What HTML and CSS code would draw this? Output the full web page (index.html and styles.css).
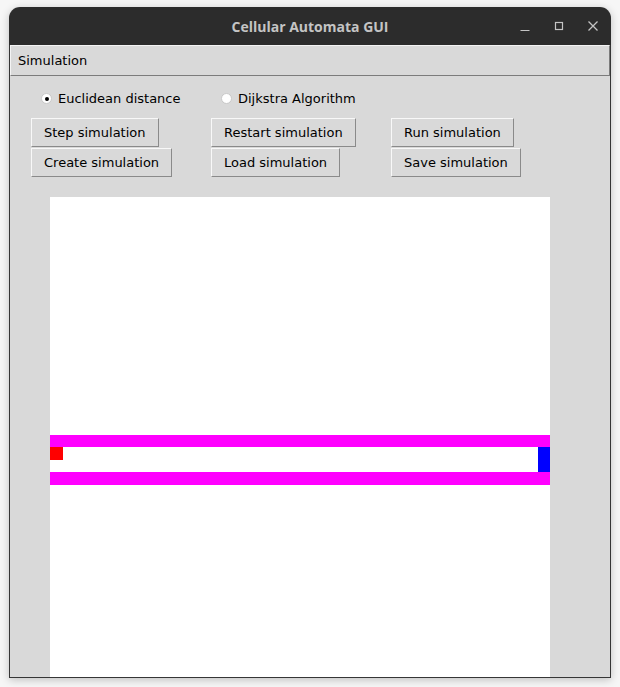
FILE: index.html
```html
<!DOCTYPE html>
<html>
<head>
<meta charset="utf-8">
<title>Cellular Automata GUI</title>
<link rel="stylesheet" href="styles.css">
</head>
<body>
<div class="window">
  <div class="titlebar">
    <span class="title">Cellular Automata GUI</span>
    <div class="controls">
      <svg class="ctl" width="12" height="12" viewBox="0 0 12 12"><path d="M1.5 10.5h9" stroke="#c4c4c4" stroke-width="1.2"/></svg>
      <svg class="ctl" width="12" height="12" viewBox="0 0 12 12"><rect x="2.5" y="2.5" width="7" height="7" fill="none" stroke="#c4c4c4" stroke-width="1.2"/></svg>
      <svg class="ctl" width="12" height="12" viewBox="0 0 12 12"><path d="M1.5 1.5l9 9M10.5 1.5l-9 9" stroke="#c4c4c4" stroke-width="1.3"/></svg>
    </div>
  </div>
  <div class="frame">
    <div class="menubar"><span class="menu-item">Simulation</span></div>
    <div class="content">
      <div class="grid">
        <label class="radio"><span class="dot checked"></span>Euclidean distance</label>
        <label class="radio"><span class="dot"></span>Dijkstra Algorithm</label>
        <span></span>
        <div class="cell"><button class="btn">Step simulation</button></div>
        <div class="cell"><button class="btn">Restart simulation</button></div>
        <div class="cell"><button class="btn">Run simulation</button></div>
        <div class="cell"><button class="btn">Create simulation</button></div>
        <div class="cell"><button class="btn">Load simulation</button></div>
        <div class="cell"><button class="btn">Save simulation</button></div>
      </div>
      <div class="canvas">
        <svg width="500" height="500" viewBox="0 0 500 500" shape-rendering="crispEdges">
          <rect x="0" y="237.5" width="500" height="12.5" fill="#ff00ff"/>
          <rect x="0" y="275" width="500" height="12.5" fill="#ff00ff"/>
          <rect x="0" y="250" width="12.5" height="12.5" fill="#ff0000"/>
          <rect x="487.5" y="250" width="12.5" height="25" fill="#0000ff"/>
        </svg>
      </div>
    </div>
  </div>
</div>
</body>
</html>
```
FILE: styles.css
```css
html, body {
  margin: 0;
  padding: 0;
}
body {
  background: #f6f6f6;
  width: 620px;
  height: 687px;
  overflow: hidden;
  font-family: "DejaVu Sans", sans-serif;
  font-size: 13px;
  color: #000;
}
.window {
  margin: 7px 0 0 9px;
  width: 602px;
  height: 671px;
  border-radius: 11px 11px 0 0;
  overflow: hidden;
  box-shadow: 0 2px 8px rgba(0, 0, 0, 0.22);
  display: flex;
  flex-direction: column;
}
.titlebar {
  height: 38px;
  flex: none;
  background: #2c2c2c;
  position: relative;
  display: flex;
  align-items: center;
  justify-content: center;
}
.title {
  font-family: "Open Sans", sans-serif;
  font-weight: 700;
  font-size: 14px;
  color: #c4c4c4;
}
.controls {
  position: absolute;
  right: 12px;
  top: 13px;
  display: flex;
  gap: 22px;
}
.ctl {
  display: block;
}
.frame {
  flex: 1;
  background: #d9d9d9;
  border: 1px solid #363636;
  border-top: none;
  display: flex;
  flex-direction: column;
  overflow: hidden;
}
.menubar {
  height: 29px;
  flex: none;
  border-top: 1px solid #f4f4f4;
  border-left: 1px solid #f4f4f4;
  border-right: 1px solid #7c7c7c;
  border-bottom: 1px solid #7c7c7c;
  display: flex;
  align-items: center;
  padding-left: 7px;
}
.menu-item {
  font-size: 13px;
}
.content {
  flex: 1;
  overflow: hidden;
  padding: 10px 0 0 21px;
}
.grid {
  display: grid;
  grid-template-columns: 180px 180px 180px;
  grid-template-rows: 31px 29px 29px;
  row-gap: 1px;
}
.radio {
  display: flex;
  align-items: center;
  align-self: start;
  padding-left: 10px;
  padding-top: 1px;
  height: 23px;
}
.dot {
  width: 9px;
  height: 9px;
  border-radius: 50%;
  background: #fff;
  border: 1px solid #c9c9c9;
  margin-right: 6px;
  position: relative;
  box-sizing: content-box;
}
.dot.checked::after {
  content: "";
  position: absolute;
  left: 2.5px;
  top: 2.5px;
  width: 4px;
  height: 4px;
  border-radius: 50%;
  background: #000;
}
.cell {
  display: flex;
}
.btn {
  font-family: "DejaVu Sans", sans-serif;
  font-size: 13px;
  color: #000;
  background: #d9d9d9;
  height: 29px;
  padding: 0 12px;
  border: 1px solid;
  border-color: #f8f8f8 #8a8a8a #8a8a8a #f8f8f8;
  border-radius: 0;
  margin: 0;
}
.canvas {
  margin: 20px 0 0 19px;
  width: 500px;
  height: 500px;
  background: #fff;
}
.canvas svg {
  display: block;
}
```
